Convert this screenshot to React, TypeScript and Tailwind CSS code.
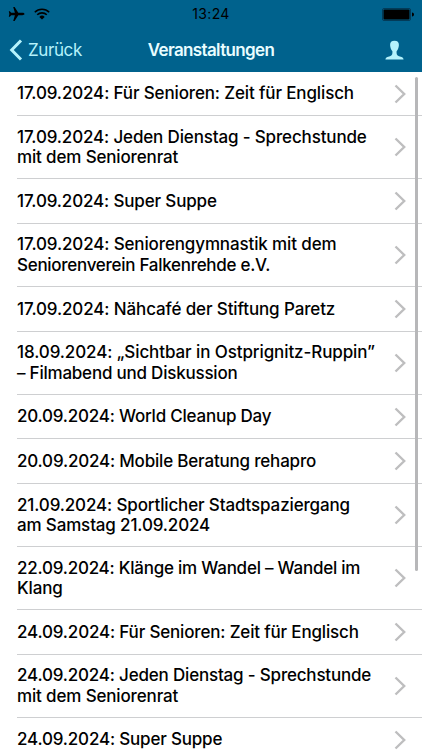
type Line = { text: string; tracking: string };

const line = (text: string, tracking = 'tracking-[-0.15px]'): Line => ({ text, tracking });

const events: Line[][] = [
  [line('17.09.2024: Für Senioren: Zeit für Englisch', 'tracking-[-0.14px]')],
  [line('17.09.2024: Jeden Dienstag - Sprechstunde'), line('mit dem Seniorenrat')],
  [line('17.09.2024: Super Suppe')],
  [line('17.09.2024: Seniorengymnastik mit dem', 'tracking-[-0.13px]'), line('Seniorenverein Falkenrehde e.V.', 'tracking-[-0.28px]')],
  [line('17.09.2024: Nähcafé der Stiftung Paretz', 'tracking-[-0.12px]')],
  [line('18.09.2024: „Sichtbar in Ostprignitz-Ruppin”', 'tracking-[-0.1px]'), line('– Filmabend und Diskussion', 'tracking-[-0.22px]')],
  [line('20.09.2024: World Cleanup Day', 'tracking-[-0.22px]')],
  [line('20.09.2024: Mobile Beratung rehapro', 'tracking-[-0.19px]')],
  [line('21.09.2024: Sportlicher Stadtspaziergang', 'tracking-[-0.14px]'), line('am Samstag 21.09.2024')],
  [line('22.09.2024: Klänge im Wandel – Wandel im', 'tracking-[-0.23px]'), line('Klang')],
  [line('24.09.2024: Für Senioren: Zeit für Englisch', 'tracking-[-0.17px]')],
  [line('24.09.2024: Jeden Dienstag - Sprechstunde', 'tracking-[-0.19px]'), line('mit dem Seniorenrat')],
  [line('24.09.2024: Super Suppe', 'tracking-[-0.18px]')],
];

function StatusBar() {
  return (
    <div className="grid h-7 grid-cols-3 items-center pr-[7px] pl-[8px] text-black">
      <div className="flex items-center gap-[9px]">
        <svg width="17" height="16" viewBox="0 0 17 16" fill="currentColor">
          <path d="M16.500 8c0-.7-1-1.200-2.200-1.200H10.300L6.600 1H5.200l1.700 5.800H3.200L1.800 5.200H.8L1.400 8l-.6 2.800h1L3.200 9.200h3.700L5.200 15h1.400l3.700-5.800h4c1.200 0 2.200-.5 2.200-1.200z" />
        </svg>
        <svg width="16" height="12" viewBox="0 0 16 12" fill="none" stroke="currentColor" strokeWidth="1.6">
          <path d="M.8 4.200a10.300 10.300 0 0 1 14.400 0M3.200 6.800a6.900 6.900 0 0 1 9.600 0" />
          <path d="M8 11.600 5.300 8.900a3.900 3.900 0 0 1 5.400 0z" fill="currentColor" stroke="none" />
        </svg>
      </div>
      <span className="text-center text-[14px] leading-4 tracking-[0.35px] -mr-[2px] -ml-[1px] -translate-x-px">13:24</span>
      <svg className="justify-self-end" width="33" height="13" viewBox="0 0 33 13">
        <rect x=".5" y=".5" width="28" height="12" rx="1.500" fill="none" stroke="#033b58" />
        <rect x="1.500" y="1.500" width="26" height="10" rx="1" fill="#000" />
        <path d="M30 4.500c1.500.3 2 1 2 2s-.5 1.700-2 2z" fill="#000" />
      </svg>
    </div>
  );
}

function NavBar() {
  return (
    <div className="grid h-[44px] grid-cols-[1fr_auto_1fr] items-center px-[9px]">
      <div className="flex items-center gap-[5px] text-[#b5f2fb]">
        <svg width="14" height="22" viewBox="0 0 14 22" fill="none" stroke="currentColor" strokeWidth="3">
          <path d="M12 1.500 2.700 11l9.300 9.500" />
        </svg>
        <span className="text-[17px] leading-5 tracking-[-0.4px]">Zurück</span>
      </div>
      <h1 className="text-[17px] leading-5 font-semibold tracking-[-0.63px] text-[#e9fdff]">Veranstaltungen</h1>
      <svg className="mr-[9px] justify-self-end text-[#b5f2fb]" width="19" height="20" viewBox="0 0 19 20" fill="currentColor">
        <path d="M9.500.8C6.500.8 5 2.300 5.100 5c.1 2.600.9 4.600 2.300 6.200.2 2.800-.2 4.200-2.400 5-2.600.8-4.500 1-4.600 3.300h18.200c-.1-2.300-2-2.500-4.600-3.300-2.200-.8-2.600-2.200-2.400-5 1.400-1.600 2.200-3.600 2.300-6.200C14 2.300 12.500.8 9.500.8z" />
      </svg>
    </div>
  );
}

function EventRow({ lines }: { lines: Line[] }) {
  return (
    <li className={`ml-[17px] flex shrink-0 items-center justify-between border-b border-[#cecfd1] pr-[16.500px] ${lines.length > 1 ? 'h-[62.9px]' : 'h-[44.8px]'}`}>
      <div className="text-[17px] leading-[20.6px] font-[450] whitespace-nowrap">
        {lines.map(({ text, tracking }) => (
          <span key={text} className={`block ${tracking}`}>{text}</span>
        ))}
      </div>
      <svg className="shrink-0" width="12" height="20" viewBox="0 0 12 20" fill="none" stroke="#bebebf" strokeWidth="2.400">
        <path d="m1.500 1.500 8.700 8.500-8.700 8.500" />
      </svg>
    </li>
  );
}

export default function App() {
  return (
    <div className="relative flex h-[750px] w-[422px] flex-col overflow-hidden bg-white font-['Inter','Liberation_Sans',sans-serif] text-black">
      <header className="h-[72px] shrink-0 bg-[#00628d]">
        <StatusBar />
        <NavBar />
      </header>
      <ul className="-mt-[1.4px] flex min-h-0 flex-1 flex-col overflow-hidden pt-px">
        {events.map((lines) => (
          <EventRow key={lines[0].text} lines={lines} />
        ))}
      </ul>
      <div className="absolute top-[77px] right-[4px] h-[494px] w-[3px] rounded-full bg-[#b7b7b9]" />
    </div>
  );
}
